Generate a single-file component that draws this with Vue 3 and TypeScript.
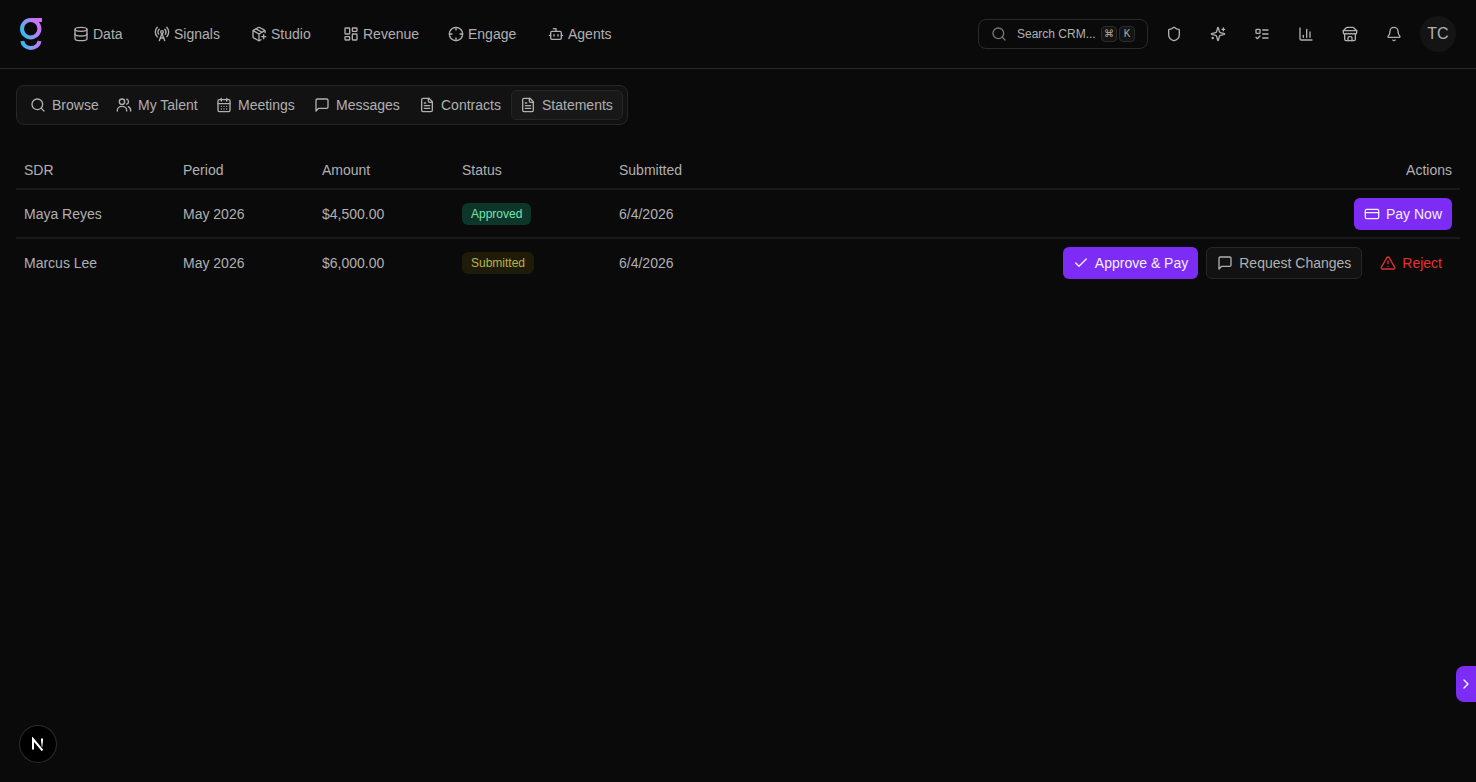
<script setup lang="ts">
type IconName =
  | 'database' | 'signal' | 'package' | 'dashboard' | 'crosshair' | 'bot'
  | 'search' | 'users' | 'calendar' | 'message' | 'file'
  | 'shield' | 'sparkles' | 'todo' | 'chart' | 'store' | 'bell'
  | 'card' | 'check' | 'alert' | 'chevron'

const icons: Record<IconName, string> = {
  database: '<ellipse cx="12" cy="5" rx="9" ry="3"/><path d="M3 5V19A9 3 0 0 0 21 19V5"/><path d="M3 12A9 3 0 0 0 21 12"/>',
  signal: '<path d="M4.9 16.1C1 12.2 1 5.8 4.9 1.9"/><path d="M7.8 4.7a6.14 6.14 0 0 0-.8 7.5"/><circle cx="12" cy="9" r="2"/><path d="M16.2 4.8c2 2 2.26 5.11.8 7.47"/><path d="M19.1 1.9a9.96 9.96 0 0 1 0 14.1"/><path d="M9.5 18h5"/><path d="m8 22 4-11 4 11"/>',
  package: '<path d="M16 16h6"/><path d="M19 13v6"/><path d="M21 10V8a2 2 0 0 0-1-1.73l-7-4a2 2 0 0 0-2 0l-7 4A2 2 0 0 0 3 8v8a2 2 0 0 0 1 1.73l7 4a2 2 0 0 0 2 0l2-1.14"/><path d="m7.5 4.27 9 5.15"/><path d="M3.29 7 12 12l8.71-5"/><path d="M12 22V12"/>',
  dashboard: '<rect width="7" height="9" x="3" y="3" rx="1"/><rect width="7" height="5" x="14" y="3" rx="1"/><rect width="7" height="9" x="14" y="12" rx="1"/><rect width="7" height="5" x="3" y="16" rx="1"/>',
  crosshair: '<circle cx="12" cy="12" r="10"/><path d="M22 12h-4"/><path d="M6 12H2"/><path d="M12 6V2"/><path d="M12 22v-4"/>',
  bot: '<path d="M12 8V4H8"/><rect width="16" height="12" x="4" y="8" rx="2"/><path d="M2 14h2"/><path d="M20 14h2"/><path d="M15 13v2"/><path d="M9 13v2"/>',
  search: '<circle cx="11" cy="11" r="8"/><path d="m21 21-4.3-4.3"/>',
  users: '<circle cx="9" cy="7" r="4"/><path d="M2 21v-1a7 6 0 0 1 14 0v1"/><path d="M16 3.2a4 4 0 0 1 0 7.6"/><path d="M18.500 14.500a6.500 6.500 0 0 1 3.500 6.500"/>',
  calendar: '<path d="M8 2v4"/><path d="M16 2v4"/><rect width="18" height="18" x="3" y="4" rx="2"/><path d="M3 10h18"/><path d="M8 14h.01"/><path d="M12 14h.01"/><path d="M16 14h.01"/><path d="M8 18h.01"/><path d="M12 18h.01"/><path d="M16 18h.01"/>',
  message: '<path d="M21 15a2 2 0 0 1-2 2H7l-4 4V5a2 2 0 0 1 2-2h14a2 2 0 0 1 2 2z"/>',
  file: '<path d="M15 2H6a2 2 0 0 0-2 2v16a2 2 0 0 0 2 2h12a2 2 0 0 0 2-2V7Z"/><path d="M14 2v4a2 2 0 0 0 2 2h4"/><path d="M10 9H8"/><path d="M16 13H8"/><path d="M16 17H8"/>',
  shield: '<path d="M20 13c0 5-3.5 7.5-7.66 8.95a1 1 0 0 1-.67-.01C7.5 20.5 4 18 4 13V6a1 1 0 0 1 1-1c2 0 4.5-1.2 6.24-2.72a1.17 1.17 0 0 1 1.52 0C14.51 3.81 17 5 19 5a1 1 0 0 1 1 1z"/>',
  sparkles: '<path d="M9.94 15.5A2 2 0 0 0 8.5 14.06l-6.14-1.58a.5.5 0 0 1 0-.96L8.5 9.94A2 2 0 0 0 9.94 8.5l1.58-6.14a.5.5 0 0 1 .96 0l1.58 6.14a2 2 0 0 0 1.44 1.44l6.14 1.58a.5.5 0 0 1 0 .96l-6.14 1.58a2 2 0 0 0-1.44 1.44l-1.58 6.14a.5.5 0 0 1-.96 0z"/><path d="M20 3v4"/><path d="M22 5h-4"/><path d="M4 17v2"/><path d="M5 18H3"/>',
  todo: '<rect x="3" y="5" width="6" height="6" rx="1"/><path d="m3 17 2 2 4-4"/><path d="M13 6h8"/><path d="M13 12h8"/><path d="M13 18h8"/>',
  chart: '<path d="M3 3v16a2 2 0 0 0 2 2h16"/><path d="M13 17V5"/><path d="M18 17V9"/><path d="M8 17v-3"/>',
  store: '<path d="m2 7 4.41-4.41A2 2 0 0 1 7.83 2h8.34a2 2 0 0 1 1.42.59L22 7"/><path d="M4 12v8a2 2 0 0 0 2 2h12a2 2 0 0 0 2-2v-8"/><path d="M15 22v-4a2 2 0 0 0-2-2h-2a2 2 0 0 0-2 2v4"/><path d="M2 7h20"/><path d="M22 7v3a2 2 0 0 1-2 2 2.7 2.7 0 0 1-1.59-.63.7.7 0 0 0-.82 0A2.7 2.7 0 0 1 16 12a2.7 2.7 0 0 1-1.59-.63.7.7 0 0 0-.82 0A2.7 2.7 0 0 1 12 12a2.7 2.7 0 0 1-1.59-.63.7.7 0 0 0-.82 0A2.7 2.7 0 0 1 8 12a2.7 2.7 0 0 1-1.59-.63.7.7 0 0 0-.82 0A2.7 2.7 0 0 1 4 12a2 2 0 0 1-2-2V7"/>',
  bell: '<path d="M10.27 21a2 2 0 0 0 3.46 0"/><path d="M3.26 15.33A1 1 0 0 0 4 17h16a1 1 0 0 0 .74-1.67C19.41 13.96 18 12.5 18 8A6 6 0 0 0 6 8c0 4.5-1.41 5.96-2.74 7.33"/>',
  card: '<rect width="20" height="14" x="2" y="5" rx="2"/><path d="M2 10h20"/>',
  check: '<path d="M20 6 9 17l-5-5"/>',
  alert: '<path d="m21.73 18-8-14a2 2 0 0 0-3.48 0l-8 14A2 2 0 0 0 4 21h16a2 2 0 0 0 1.73-3"/><path d="M12 9v4"/><path d="M12 17h.01"/>',
  chevron: '<path d="m9 18 6-6-6-6"/>',
}

const navItems: { label: string; icon: IconName }[] = [
  { label: 'Data', icon: 'database' },
  { label: 'Signals', icon: 'signal' },
  { label: 'Studio', icon: 'package' },
  { label: 'Revenue', icon: 'dashboard' },
  { label: 'Engage', icon: 'crosshair' },
  { label: 'Agents', icon: 'bot' },
]

const tools: { label: string; icon: IconName }[] = [
  { label: 'Admin', icon: 'shield' },
  { label: 'Assistant', icon: 'sparkles' },
  { label: 'Tasks', icon: 'todo' },
  { label: 'Reports', icon: 'chart' },
  { label: 'Marketplace', icon: 'store' },
  { label: 'Notifications', icon: 'bell' },
]

const tabs: { label: string; icon: IconName }[] = [
  { label: 'Browse', icon: 'search' },
  { label: 'My Talent', icon: 'users' },
  { label: 'Meetings', icon: 'calendar' },
  { label: 'Messages', icon: 'message' },
  { label: 'Contracts', icon: 'file' },
  { label: 'Statements', icon: 'file' },
]
const activeTab = 'Statements'

interface Action { label: string; icon: IconName; kind: 'primary' | 'outline' | 'danger' }
interface Statement {
  sdr: string
  period: string
  amount: string
  status: 'Approved' | 'Submitted'
  submitted: string
  actions: Action[]
}

const statements: Statement[] = [
  {
    sdr: 'Maya Reyes', period: 'May 2026', amount: '$4,500.00', status: 'Approved', submitted: '6/4/2026',
    actions: [{ label: 'Pay Now', icon: 'card', kind: 'primary' }],
  },
  {
    sdr: 'Marcus Lee', period: 'May 2026', amount: '$6,000.00', status: 'Submitted', submitted: '6/4/2026',
    actions: [
      { label: 'Approve & Pay', icon: 'check', kind: 'primary' },
      { label: 'Request Changes', icon: 'message', kind: 'outline' },
      { label: 'Reject', icon: 'alert', kind: 'danger' },
    ],
  },
]
</script>

<template>
  <div class="app">
    <header class="topbar">
      <a class="logo" href="#" aria-label="Home">
        <svg width="22" height="32" viewBox="0 0 22 32" fill="none">
          <defs>
            <linearGradient id="logo-fill" x1="1" y1="18" x2="20" y2="9" gradientUnits="userSpaceOnUse">
              <stop offset="0" stop-color="#22c3ee" />
              <stop offset="0.5" stop-color="#8f94fa" />
              <stop offset="1" stop-color="#d070f5" />
            </linearGradient>
            <linearGradient id="logo-tail" x1="0" y1="0" x2="22" y2="0" gradientUnits="userSpaceOnUse">
              <stop offset="0.1" stop-color="#35b8f0" />
              <stop offset="0.5" stop-color="#7f9ff8" />
              <stop offset="1" stop-color="#d070f5" />
            </linearGradient>
          </defs>
          <circle cx="10.7" cy="10.7" r="8.7" stroke="url(#logo-fill)" stroke-width="4" />
          <path d="M11 0H22V4H18L13 3Z" fill="url(#logo-fill)" />
          <path d="M2.3 23C2.8 27 6.4 30 10.9 30S19 27 19.5 23" stroke="url(#logo-tail)" stroke-width="4" />
        </svg>
      </a>
      <nav class="nav" aria-label="Main">
        <a v-for="item in navItems" :key="item.label" class="nav-item" href="#">
          <svg class="icon" viewBox="0 0 24 24" v-html="icons[item.icon]"></svg>
          <span>{{ item.label }}</span>
        </a>
      </nav>
      <div class="tools">
        <button class="search" type="button">
          <svg class="icon" viewBox="0 0 24 24" v-html="icons.search"></svg>
          <span class="search-text">Search CRM...</span>
          <span class="keys"><kbd>⌘</kbd><kbd>K</kbd></span>
        </button>
        <button v-for="tool in tools" :key="tool.label" class="tool" type="button" :aria-label="tool.label">
          <svg class="icon" viewBox="0 0 24 24" v-html="icons[tool.icon]"></svg>
        </button>
        <button class="avatar" type="button">TC</button>
      </div>
    </header>

    <main class="content">
      <nav class="tabs" aria-label="Talent">
        <a
          v-for="tab in tabs"
          :key="tab.label"
          class="tab"
          :class="{ active: tab.label === activeTab }"
          href="#"
        >
          <svg class="icon" viewBox="0 0 24 24" v-html="icons[tab.icon]"></svg>
          <span>{{ tab.label }}</span>
        </a>
      </nav>

      <table class="statements">
        <colgroup>
          <col class="col-sdr" />
          <col class="col-period" />
          <col class="col-amount" />
          <col class="col-status" />
          <col />
          <col class="col-actions" />
        </colgroup>
        <thead>
          <tr>
            <th>SDR</th>
            <th>Period</th>
            <th>Amount</th>
            <th>Status</th>
            <th>Submitted</th>
            <th class="right">Actions</th>
          </tr>
        </thead>
        <tbody>
          <tr v-for="row in statements" :key="row.sdr">
            <td>{{ row.sdr }}</td>
            <td>{{ row.period }}</td>
            <td>{{ row.amount }}</td>
            <td><span class="badge" :class="row.status.toLowerCase()">{{ row.status }}</span></td>
            <td>{{ row.submitted }}</td>
            <td>
              <div class="actions">
                <button v-for="action in row.actions" :key="action.label" class="btn" :class="action.kind" type="button">
                  <svg class="icon" viewBox="0 0 24 24" v-html="icons[action.icon]"></svg>
                  <span>{{ action.label }}</span>
                </button>
              </div>
            </td>
          </tr>
        </tbody>
      </table>
    </main>

    <button class="drawer-handle" type="button" aria-label="Open panel">
      <svg class="icon" viewBox="0 0 24 24" v-html="icons.chevron"></svg>
    </button>
    <button class="dev-badge" type="button" aria-label="Developer tools">
      <svg width="14" height="14" viewBox="0 0 14 14" fill="none">
        <defs>
          <linearGradient id="dev-fade" x1="0" y1="0" x2="0" y2="12" gradientUnits="userSpaceOnUse">
            <stop offset="0.3" stop-color="#fff" />
            <stop offset="1" stop-color="#fff" stop-opacity="0" />
          </linearGradient>
        </defs>
        <path d="M2 12.5V2L11.5 13.5" stroke="#fff" stroke-width="2" />
        <path d="M11 1.5V10" stroke="url(#dev-fade)" stroke-width="2" />
      </svg>
    </button>
  </div>
</template>

<style>
body {
  background: #0a0a0a;
}
</style>

<style scoped>
.app {
  min-height: 100vh;
  background: #0a0a0a;
  color: #b0b0b2;
  font-family: "Liberation Sans", Arial, sans-serif;
  font-size: 14px;
  line-height: 20px;
}
.app *, .app {
  box-sizing: border-box;
}
a {
  color: inherit;
  text-decoration: none;
}
button {
  margin: 0;
  padding: 0;
  border: 0;
  background: none;
  color: inherit;
  font: inherit;
}
.icon {
  display: block;
  flex: none;
  width: 16px;
  height: 16px;
  fill: none;
  stroke: currentColor;
  stroke-width: 2;
  stroke-linecap: round;
  stroke-linejoin: round;
}
.topbar {
  display: flex;
  align-items: center;
  justify-content: space-between;
  height: 69px;
  padding: 0 20px;
  border-bottom: 1px solid #2a2a2a;
}
.logo {
  margin-right: 31px;
}
.logo svg {
  display: block;
}
.nav {
  display: grid;
  flex: 1;
  grid-template-columns: 81px 97px 92px 105px 100px auto;
}
.nav-item {
  display: flex;
  align-items: center;
  gap: 4px;
}
.tools {
  display: flex;
  align-items: center;
  gap: 8px;
}
.search {
  display: flex;
  align-items: center;
  width: 170px;
  height: 30px;
  padding: 0 12px;
  border: 1px solid #2a2a2a;
  border-radius: 8px;
  font-size: 12px;
}
.search .icon {
  color: #77777a;
}
.search-text {
  flex: 1;
  margin-left: 10px;
  text-align: left;
  white-space: nowrap;
}
.keys {
  display: flex;
  gap: 2px;
}
kbd {
  width: 16px;
  height: 16px;
  border: 1px solid #2c2c2c;
  border-radius: 4px;
  background: #141414;
  font-family: "Liberation Sans", "DejaVu Sans", sans-serif;
  font-size: 10px;
  line-height: 14px;
  text-align: center;
}
.tool {
  display: grid;
  place-items: center;
  width: 36px;
  height: 36px;
}
.avatar {
  width: 36px;
  height: 36px;
  border-radius: 50%;
  background: #141414;
  font-size: 16px;
}
.content {
  padding: 16px;
}
.tabs {
  display: grid;
  grid-template-columns: 86px 100px 98px 105px 101px 112px;
  width: fit-content;
  padding: 4px;
  border: 1px solid #262626;
  border-radius: 8px;
  background: #121212;
}
.tab {
  display: flex;
  align-items: center;
  gap: 6px;
  height: 30px;
  padding: 0 8px;
  border: 1px solid transparent;
  border-radius: 6px;
  white-space: nowrap;
}
.tab.active {
  border-color: #262626;
  background: #181818;
}
.statements {
  width: 100%;
  margin-top: 24px;
  border-spacing: 0;
  table-layout: fixed;
}
.col-sdr { width: 159px; }
.col-period { width: 139px; }
.col-amount { width: 140px; }
.col-status { width: 157px; }
.col-actions { width: 420px; }
th, td {
  padding: 8px 8px 7px;
  text-align: left;
  font-weight: 400;
  white-space: nowrap;
}
th {
  height: 41px;
  padding: 10px 8px 8px;
}
th, tbody tr:not(:last-child) td {
  border-bottom: 2px solid #1a1a1a;
}
.statements .right {
  text-align: right;
}
.badge {
  display: inline-block;
  padding: 3px 9px;
  border-radius: 6px;
  font-size: 12px;
  line-height: 16px;
}
.badge.approved {
  background: #0e3529;
  color: #6ee7b0;
}
.badge.submitted {
  background: #1e1c08;
  color: #b9b34a;
}
.actions {
  display: flex;
  justify-content: flex-end;
  gap: 8px;
}
.btn {
  display: flex;
  align-items: center;
  gap: 6px;
  height: 32px;
  padding: 0 10px;
  border-radius: 6px;
}
.btn.primary {
  background: #7c2cf5;
  color: #f5f0ff;
}
.btn.outline {
  border: 1px solid #262626;
  background: #121212;
}
.btn.danger {
  color: #e5302d;
}
.drawer-handle {
  position: fixed;
  right: 0;
  bottom: 80px;
  display: grid;
  place-items: center;
  width: 20px;
  height: 36px;
  border-radius: 8px 0 0 8px;
  background: #7c2cf5;
  color: #fff;
}
.dev-badge {
  position: fixed;
  left: 20px;
  bottom: 20px;
  display: grid;
  place-items: center;
  width: 36px;
  height: 36px;
  border-radius: 50%;
  background: #000;
  box-shadow: 0 0 0 1px #2e2e2e;
}
</style>
